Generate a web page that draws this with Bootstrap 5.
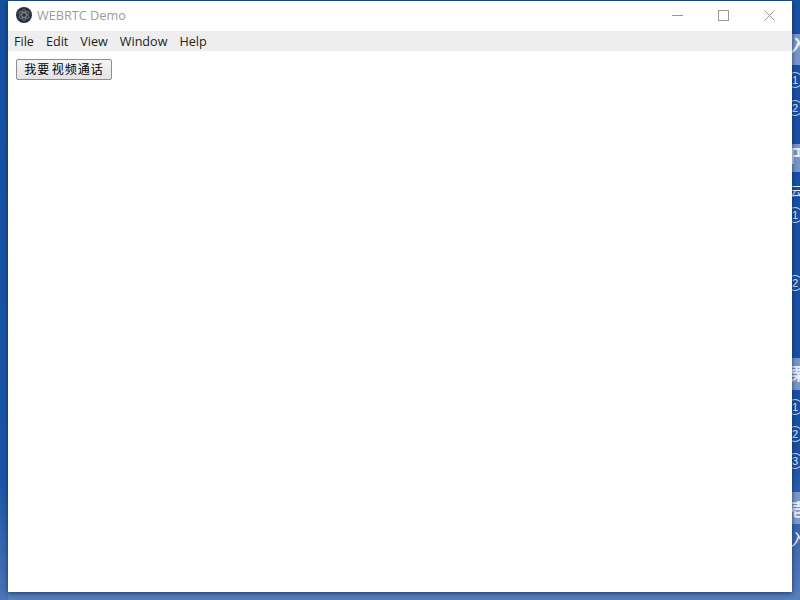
<!DOCTYPE html>
<html lang="zh">
<head>
    <meta charset="UTF-8">
    <title>WEBRTC Demo</title>
    <link href="https://cdn.jsdelivr.net/npm/bootstrap@5.3.0/dist/css/bootstrap.min.css" rel="stylesheet">
    <style>
        html, body { height: 600px; overflow: hidden; }
        body { background: #4a74b4; position: relative; }
        .desk-bg { position: absolute; inset: 0; background: linear-gradient(#1a50a4 0, #1a50a4 75%, #4a74b6 95%, #5580bd 100%); }
        .desk-left { position: absolute; left: 0; top: 0; width: 8px; height: 600px; background: linear-gradient(#14509f 0, #1b56a8 80%, #4a74b6 100%); }
        .desk-band { position: absolute; left: 792px; width: 8px; background: #8ea9d2; opacity: .8; }
        .desk-num { position: absolute; left: 787px; width: 16px; height: 16px; border: 1px solid #d5e0f1; border-radius: 50%; color: #e4ecf7; font: 11px/14px "Liberation Sans", sans-serif; text-align: center; }
        .desk-char { position: absolute; left: 790px; color: #e8eef8; font: 700 17px/18px "Noto Sans CJK SC", sans-serif; }
        .app-window { position: relative; width: 784px; height: 591px; margin: 1px 0 0 8px; background: #fff; box-shadow: 0 1px 5px rgba(20, 30, 60, .75); }
        .title-bar { height: 30px; padding: 0 0 2px 8px; font: 12.7px/1 "Open Sans", sans-serif; color: #9b9b9b; }
        .title-logo { width: 16px; height: 16px; margin: 0 5px 0 0; }
        .win-ctrl { width: 46px; height: 28px; }
        .menu-strip { height: 20px; background: #eeeeee; padding: 1px 0 0 6px; font: 12.6px/19px "Open Sans", sans-serif; color: #222; }
        .menu-entry { padding: 0 6px 0 0; margin-right: 6px; }
        .call-btn { width: 96px; height: 21px; margin: 8px 0 0 8px; padding: 0 0 2px; font: 12px/17px "Noto Sans CJK SC", sans-serif; color: #000; background: linear-gradient(#f4f4f4, #e4e4e4); border: 1px solid #8e8e8e; border-radius: 2px; word-spacing: -2px; letter-spacing: 1px; }
    </style>
</head>
<body>
    <div class="desk-bg"></div>
    <div class="desk-left"></div>
    <div class="desk-band" style="top:34px;height:31px"></div>
    <div class="desk-band" style="top:144px;height:28px"></div>
    <div class="desk-band" style="top:358px;height:32px"></div>
    <div class="desk-band" style="top:492px;height:32px"></div>
    <span class="desk-char" style="top:36px">入</span>
    <span class="desk-char" style="top:146px">円</span>
    <span class="desk-char" style="top:182px;font-weight:400;font-size:12px">云</span>
    <span class="desk-char" style="top:364px">栗</span>
    <span class="desk-char" style="top:500px">壱</span>
    <span class="desk-char" style="top:530px;font-weight:400">入</span>
    <span class="desk-num" style="top:72px">1</span>
    <span class="desk-num" style="top:100px">2</span>
    <span class="desk-num" style="top:207px">1</span>
    <span class="desk-num" style="top:275px">2</span>
    <span class="desk-num" style="top:399px">1</span>
    <span class="desk-num" style="top:426px">2</span>
    <span class="desk-num" style="top:453px">3</span>

    <div class="app-window">
        <div class="title-bar d-flex align-items-center">
            <svg class="title-logo" viewBox="0 0 16 16">
                <circle cx="8" cy="8" r="8" fill="#2b2e3a"/>
                <g fill="none" stroke="#8d9aa8" stroke-width=".7">
                    <ellipse cx="8" cy="8" rx="5.6" ry="2.2" transform="rotate(30 8 8)"/>
                    <ellipse cx="8" cy="8" rx="5.6" ry="2.2" transform="rotate(90 8 8)"/>
                    <ellipse cx="8" cy="8" rx="5.6" ry="2.2" transform="rotate(150 8 8)"/>
                </g>
            </svg>
            <span class="me-auto">WEBRTC Demo</span>
            <div class="win-ctrl d-flex align-items-center justify-content-center">
                <svg width="11" height="11" viewBox="0 0 11 11"><path d="M0 5.5h11" stroke="#999" fill="none"/></svg>
            </div>
            <div class="win-ctrl d-flex align-items-center justify-content-center">
                <svg width="11" height="11" viewBox="0 0 11 11"><rect x=".5" y=".5" width="10" height="10" stroke="#999" fill="none"/></svg>
            </div>
            <div class="win-ctrl d-flex align-items-center justify-content-center">
                <svg width="11" height="11" viewBox="0 0 11 11"><path d="M.5.5l10 10M10.5.5l-10 10" stroke="#999" fill="none"/></svg>
            </div>
        </div>
        <div class="menu-strip d-flex">
            <span class="menu-entry">File</span>
            <span class="menu-entry">Edit</span>
            <span class="menu-entry">View</span>
            <span class="menu-entry">Window</span>
            <span class="menu-entry">Help</span>
        </div>
        <button type="button" class="call-btn d-block">我要 视频通话</button>
    </div>
    <script src="https://cdn.jsdelivr.net/npm/bootstrap@5.3.0/dist/js/bootstrap.bundle.min.js"></script>
</body>
</html>
